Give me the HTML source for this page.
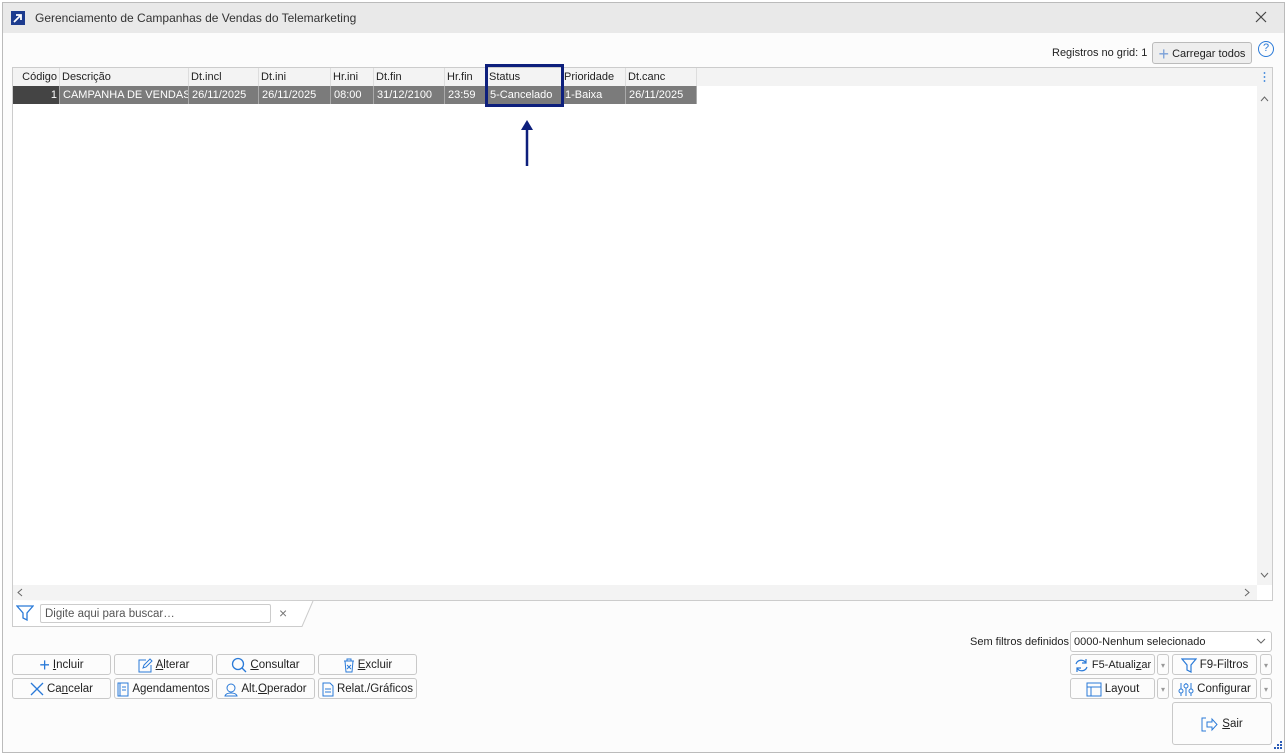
<!DOCTYPE html><html><head><style>
*{box-sizing:border-box}body{margin:0;width:1287px;height:755px;background:#fff;font-family:"Liberation Sans",sans-serif;font-size:11.5px;color:#222;position:relative;overflow:hidden}
.a{position:absolute;white-space:nowrap}
.win{left:2px;top:2px;width:1283px;height:751px;border:1px solid #bbb;background:#fcfcfc}
.tb{left:3px;top:3px;width:1281px;height:30px;background:#e9e9e9}
.btn{position:absolute;height:21px;border:1px solid #c9c9c9;border-radius:3px;background:#fcfcfc;display:flex;align-items:center;justify-content:center;gap:3px;font-size:11.5px;white-space:nowrap;padding-top:1px}
.h{position:absolute;top:68px;height:18px;line-height:19px;border-right:1px solid #ddd;padding-left:2px;white-space:nowrap;overflow:hidden;font-size:11px}
.c{position:absolute;top:86px;height:18px;line-height:19px;background:#7b7b7b;color:#fff;border-right:1px solid #aaa;padding-left:3px;white-space:nowrap;overflow:hidden;font-size:11px}
svg{display:block}
</style></head><body>
<div class="a win"></div><div class="a tb"></div>
<div class="a" style="left:11px;top:11px;width:14px;height:14px;background:#1d3c8f"><svg width="14" height="14"><path d="M3 11L10 4M5 4h5v5" stroke="#fff" stroke-width="1.8" fill="none"/></svg></div>
<div class="a" style="left:35px;top:11px;font-size:12px;color:#333">Gerenciamento de Campanhas de Vendas do Telemarketing</div>
<div class="a" style="left:1255px;top:11px"><svg width="12" height="12"><path d="M1 1L11 11M11 1L1 11" stroke="#444" stroke-width="1.2"/></svg></div>
<div class="a" style="left:1052px;top:47px;font-size:11px">Registros no grid: 1</div>
<div class="btn" style="left:1152px;top:42px;width:100px;height:22px;background:#eee;border-color:#bbb;font-size:11px"><span style="color:#7aa0d8;font-size:18px;line-height:10px">+</span><span>Carregar todos</span></div>
<div class="a" style="left:1258px;top:41px;width:16px;height:16px;border:1.5px solid #2a7ad8;border-radius:50%;color:#2a7ad8;font-size:11px;text-align:center;line-height:13px">?</div>
<div class="a" style="left:12px;top:67px;width:1261px;height:534px;border:1px solid #ccc;background:#fff"></div>
<div class="a" style="left:13px;top:68px;width:1244px;height:18px;background:#f3f3f3"></div>
<div class="h" style="left:13px;width:47px;text-align:right;padding-right:2px">Código</div>
<div class="h" style="left:60px;width:129px">Descrição</div>
<div class="h" style="left:189px;width:70px">Dt.incl</div>
<div class="h" style="left:259px;width:72px">Dt.ini</div>
<div class="h" style="left:331px;width:43px">Hr.ini</div>
<div class="h" style="left:374px;width:71px">Dt.fin</div>
<div class="h" style="left:445px;width:42px">Hr.fin</div>
<div class="h" style="left:487px;width:75px">Status</div>
<div class="h" style="left:562px;width:64px">Prioridade</div>
<div class="h" style="left:626px;width:71px">Dt.canc</div>
<div class="c" style="left:13px;width:47px;background:#444;text-align:right;padding-right:2px">1</div>
<div class="c" style="left:60px;width:129px">CAMPANHA DE VENDAS</div>
<div class="c" style="left:189px;width:70px">26/11/2025</div>
<div class="c" style="left:259px;width:72px">26/11/2025</div>
<div class="c" style="left:331px;width:43px">08:00</div>
<div class="c" style="left:374px;width:71px">31/12/2100</div>
<div class="c" style="left:445px;width:42px">23:59</div>
<div class="c" style="left:487px;width:75px">5-Cancelado</div>
<div class="c" style="left:562px;width:64px">1-Baixa</div>
<div class="c" style="left:626px;width:71px">26/11/2025</div>
<div class="a" style="left:485px;top:64px;width:79px;height:43px;border:3px solid #0d1f7c"></div>
<svg class="a" style="left:520px;top:118px" width="14" height="50"><path d="M7 4V48" stroke="#0d1f7c" stroke-width="2.5"/><path d="M1 12L7 2L13 12Z" fill="#0d1f7c"/></svg>
<div class="a" style="left:1257px;top:68px;width:15px;height:517px;background:#f3f3f3"></div>
<svg class="a" style="left:1257px;top:70px" width="15" height="515"><circle cx="7.5" cy="3" r="0.9" fill="#2a7ad8"/><circle cx="7.5" cy="7" r="0.9" fill="#2a7ad8"/><circle cx="7.5" cy="11" r="0.9" fill="#2a7ad8"/><path d="M4 31L7.5 27L11 31" fill="none" stroke="#666"/><path d="M4 503L7.5 507L11 503" fill="none" stroke="#666"/></svg>
<div class="a" style="left:13px;top:585px;width:1244px;height:15px;background:#f3f3f3"></div>
<svg class="a" style="left:13px;top:585px" width="1244" height="15"><path d="M9 4L5 7.5L9 11" fill="none" stroke="#666"/><path d="M1232 4L1236 7.5L1232 11" fill="none" stroke="#666"/></svg>
<svg class="a" style="left:12px;top:600px" width="302" height="27"><path d="M0.5 0V26.5H290L301 1" fill="#fff" stroke="#ccc"/></svg>
<svg class="a" style="left:16px;top:605px" width="18" height="16"><path d="M1 1H17L11 8V15L7 13V8Z" fill="none" stroke="#2a7ad8" stroke-width="1.3"/></svg>
<div class="a" style="left:40px;top:604px;width:231px;height:19px;border:1px solid #ccc;border-radius:2px;background:#fff;color:#555;padding:3px 4px">Digite aqui para buscar…</div>
<div class="a" style="left:279px;top:605px;color:#777;font-size:14px">×</div>
<div class="btn" style="left:12px;top:654px;width:99px"><span style="color:#2a7ad8;font-size:18px">+</span><span><u>I</u>ncluir</span></div>
<div class="btn" style="left:114px;top:654px;width:99px"><svg width="15" height="15"><path d="M8 2H1V14H13V7M5 10L6 7L12 1L14 3L8 9Z" fill="none" stroke="#2a7ad8"/></svg><span><u>A</u>lterar</span></div>
<div class="btn" style="left:216px;top:654px;width:99px"><svg width="16" height="16"><circle cx="7" cy="7" r="5.5" fill="none" stroke="#2a7ad8" stroke-width="1.3"/><path d="M11 11L15 15" stroke="#2a7ad8" stroke-width="1.3"/></svg><span><u>C</u>onsultar</span></div>
<div class="btn" style="left:318px;top:654px;width:99px"><svg width="12" height="15"><path d="M1 3H11M4 3V1H8V3M2 3L3 14H9L10 3M4 7L8 11M8 7L4 11" fill="none" stroke="#2a7ad8"/></svg><span><u>E</u>xcluir</span></div>
<div class="btn" style="left:12px;top:678px;width:99px"><svg width="14" height="14"><path d="M1 1L13 13M13 1L1 13" stroke="#2a7ad8" stroke-width="1.3"/></svg><span>Ca<u>n</u>celar</span></div>
<div class="btn" style="left:114px;top:678px;width:99px"><svg width="12" height="15"><rect x="1" y="1" width="10" height="13" fill="none" stroke="#2a7ad8"/><path d="M3 1V14M5 5H9M5 8H9" stroke="#2a7ad8"/></svg><span>A<u>g</u>endamentos</span></div>
<div class="btn" style="left:216px;top:678px;width:99px"><svg width="14" height="15"><circle cx="7" cy="6" r="4" fill="none" stroke="#2a7ad8"/><path d="M1 14C2 10 12 10 13 14Z" fill="none" stroke="#2a7ad8"/></svg><span>Alt.<u>O</u>perador</span></div>
<div class="btn" style="left:318px;top:678px;width:99px"><svg width="12" height="15"><path d="M1 1H8L11 4V14H1Z M3 7H9M3 10H9" fill="none" stroke="#2a7ad8"/></svg><span>Relat./Gráficos</span></div>
<div class="a" style="left:970px;top:636px;font-size:11px">Sem filtros definidos</div>
<div class="a" style="left:1070px;top:631px;width:202px;height:21px;border:1px solid #c9c9c9;border-radius:3px;background:#fff;padding:4px 3px;font-size:11px">0000-Nenhum selecionado<svg style="position:absolute;right:5px;top:6px" width="10" height="6"><path d="M1 1L5 5L9 1" fill="none" stroke="#666"/></svg></div>
<div class="btn" style="left:1070px;top:654px;width:85px;font-size:11px"><svg width="15" height="15"><path d="M12 5A5.5 5.5 0 0 0 2 6M3 10A5.5 5.5 0 0 0 13 9M12 1V5H8M3 14V10H7" fill="none" stroke="#2a7ad8" stroke-width="1.2"/></svg><span>F5-Atuali<u>z</u>ar</span></div>
<div class="btn" style="left:1157px;top:654px;width:12px;color:#999;font-size:8px">▾</div>
<div class="btn" style="left:1172px;top:654px;width:85px"><svg width="16" height="15"><path d="M1 1H15L10 7V14L6 12V7Z" fill="none" stroke="#2a7ad8" stroke-width="1.2"/></svg><span>F9-Filtros</span></div>
<div class="btn" style="left:1260px;top:654px;width:12px;color:#999;font-size:8px">▾</div>
<div class="btn" style="left:1070px;top:678px;width:85px"><svg width="16" height="15"><rect x="1" y="1" width="14" height="13" fill="none" stroke="#2a7ad8"/><path d="M1 5H15M5 5V14" stroke="#2a7ad8"/></svg><span>Layout</span></div>
<div class="btn" style="left:1157px;top:678px;width:12px;color:#999;font-size:8px">▾</div>
<div class="btn" style="left:1172px;top:678px;width:85px"><svg width="16" height="15"><path d="M3 1V14M8 1V14M13 1V14" stroke="#2a7ad8"/><circle cx="3" cy="9" r="2" fill="#fff" stroke="#2a7ad8"/><circle cx="8" cy="4" r="2" fill="#fff" stroke="#2a7ad8"/><circle cx="13" cy="9" r="2" fill="#fff" stroke="#2a7ad8"/></svg><span>Configurar</span></div>
<div class="btn" style="left:1260px;top:678px;width:12px;color:#999;font-size:8px">▾</div>
<div class="btn" style="left:1172px;top:702px;width:100px;height:43px"><svg width="18" height="15"><path d="M5 1H1V14H5" fill="none" stroke="#2a7ad8"/><path d="M6 5H11V2L16 7.5L11 13V10H6Z" fill="none" stroke="#2a7ad8"/></svg><span><u>S</u>air</span></div>
<svg class="a" style="left:1274px;top:741px" width="9" height="9"><g fill="#2a5bb8"><rect x="6" y="0" width="2" height="2"/><rect x="3" y="3" width="2" height="2"/><rect x="6" y="3" width="2" height="2"/><rect x="0" y="6" width="2" height="2"/><rect x="3" y="6" width="2" height="2"/><rect x="6" y="6" width="2" height="2"/></g></svg>
</body></html>
